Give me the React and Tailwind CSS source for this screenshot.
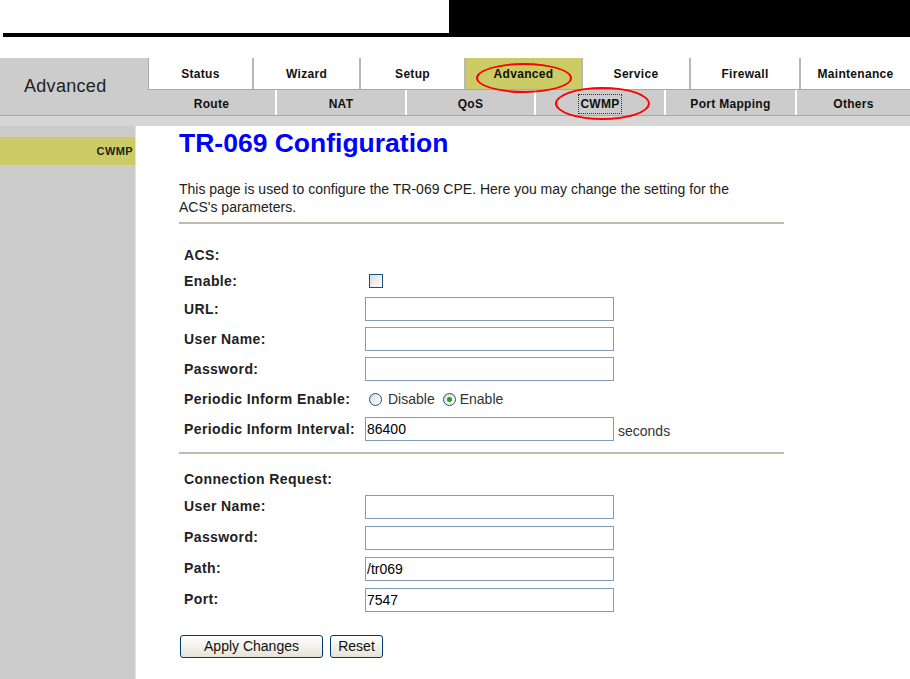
const topTabs = [
  { label: "Status", w: "w-[105px]" },
  { label: "Wizard", w: "w-[107px]" },
  { label: "Setup", w: "w-[105px]" },
  { label: "Advanced", w: "w-[117px]", active: true },
  { label: "Service", w: "w-[108px]" },
  { label: "Firewall", w: "w-[110px]" },
  { label: "Maintenance", w: "flex-1", last: true },
];

const subTabs = [
  { label: "Route", w: "w-[129px]" },
  { label: "NAT", w: "w-[130px]" },
  { label: "QoS", w: "w-[129px]" },
  { label: "CWMP", w: "w-[130px]", active: true },
  { label: "Port Mapping", w: "w-[131px]" },
  { label: "Others", w: "flex-1", last: true },
];

const TextBox = ({ value = "" }) => (
  <input
    type="text"
    defaultValue={value}
    className="w-[249px] h-[24px] border border-[#7f9db9] bg-white px-[1px] text-[14px] text-black outline-none"
  />
);

const Radio = ({ checked }) => (
  <span className="w-[13px] h-[13px] rounded-full border border-[#1c5180] bg-gradient-to-br from-[#dcdcd7] to-white flex items-center justify-center">
    {checked && <span className="w-[5px] h-[5px] rounded-full bg-[#21a121]" />}
  </span>
);

const Row = ({ label, h = "h-[30px]", children }) => (
  <div className={`flex items-center ${h}`}>
    <div className="w-[181px] text-[14px] font-bold tracking-[0.4px] text-[#222]">{label}</div>
    <div className="flex items-center">{children}</div>
  </div>
);

export default function App() {
  return (
    <div
      className="w-[910px] min-h-[679px] bg-white flex flex-col"
      style={{ fontFamily: '"Liberation Sans", Arial, sans-serif' }}
    >
      {/* TOP BAR */}
      <div className="flex h-[37px]">
        <div className="w-[449px] pl-[3px] flex flex-col justify-end">
          <div className="h-[4px] bg-black" />
        </div>
        <div className="flex-1 bg-black" />
      </div>

      {/* HEADER */}
      <div className="relative mt-[21px] flex h-[57px]">
        <div className="w-[148px] bg-[#cccccc] flex items-center pl-[24px] text-[18px] tracking-[0.3px] text-[#222]">
          Advanced
        </div>
        <div className="flex-1 flex flex-col">
          <div className="h-[32px] flex border-l border-b border-[#a8a8a8]">
            {topTabs.map((t) => (
              <div
                key={t.label}
                className={`${t.w} flex items-center justify-center text-[12px] font-bold tracking-[0.3px] text-[#111] ${
                  t.active ? "bg-[#cccc66]" : "bg-white"
                } ${t.last ? "" : "border-r-2 border-[#b8b8b8]"}`}
              >
                {t.label}
              </div>
            ))}
          </div>
          <div className="h-[25px] flex bg-[#cccccc]">
            {subTabs.map((t) => (
              <div
                key={t.label}
                className={`${t.w} flex items-center justify-center pt-[3px] text-[12px] font-bold tracking-[0.3px] text-[#111] ${
                  t.last ? "" : "border-r-2 border-white"
                }`}
              >
                <span className={t.active ? "outline outline-1 outline-dotted outline-[#333] px-[1px]" : ""}>
                  {t.label}
                </span>
              </div>
            ))}
          </div>
        </div>

        {/* red annotation ellipses */}
        <div className="absolute left-[476px] top-[5px] w-[96px] h-[30px] rounded-[50%] border-2 border-[#ff0000]" />
        <div className="absolute left-[555px] top-[29px] w-[95px] h-[33px] rounded-[50%] border-2 border-[#ff0000]" />
      </div>
      <div className="h-[1px] bg-[#a8a8a8]" />
      <div className="h-[10px] bg-[#d6d6d6]" />

      {/* BODY */}
      <div className="flex flex-1">
        <div className="w-[136px] bg-[#cccccc] border-r border-[#e2e2e2] pt-[11px]">
          <div className="h-[28px] bg-[#cccc66] flex items-center justify-end pr-[2px] text-[11px] font-bold tracking-[0.4px] text-[#222]">
            CWMP
          </div>
        </div>

        <div className="flex-1 pl-[43px] pt-[2px]">
          <h1 className="text-[26.5px] leading-[30px] font-bold text-[#0000ff]">TR-069 Configuration</h1>
          <p className="mt-[22px] w-[590px] text-[14px] leading-[18px] text-[#222]">
            This page is used to configure the TR-069 CPE. Here you may change the setting for the ACS's parameters.
          </p>
          <div className="mt-[6px] w-[605px] border-t-2 border-[#c2bbab]" />

          <div className="pl-[5px] mt-[19px]">
            <Row label="ACS:" h="h-[25px]" />
            <Row label="Enable:" h="h-[26px]">
              <span className="ml-[4px] w-[14px] h-[14px] border border-[#1c5180] bg-gradient-to-br from-[#dcdcd7] to-white" />
            </Row>
            <Row label="URL:">
              <TextBox />
            </Row>
            <Row label="User Name:">
              <TextBox />
            </Row>
            <Row label="Password:">
              <TextBox />
            </Row>
            <Row label="Periodic Inform Enable:">
              <span className="ml-[4px] flex items-center gap-[6px] text-[14px] text-[#333]">
                <Radio />
                Disable
              </span>
              <span className="ml-[8px] flex items-center gap-[4px] text-[14px] text-[#333]">
                <Radio checked />
                Enable
              </span>
            </Row>
            <Row label="Periodic Inform Interval:">
              <TextBox value="86400" />
              <span className="ml-[4px] mt-[4px] text-[14px] text-[#333]">seconds</span>
            </Row>
          </div>

          <div className="mt-[8px] w-[605px] border-t-2 border-[#c2bbab]" />

          <div className="pl-[5px] mt-[13px]">
            <Row label="Connection Request:" h="h-[24px]" />
            <Row label="User Name:" h="h-[31px]">
              <TextBox />
            </Row>
            <Row label="Password:" h="h-[31px]">
              <TextBox />
            </Row>
            <Row label="Path:" h="h-[31px]">
              <TextBox value="/tr069" />
            </Row>
            <Row label="Port:" h="h-[31px]">
              <TextBox value="7547" />
            </Row>
          </div>

          <div className="mt-[20px] flex gap-[7px] pl-[1px]">
            <button className="w-[143px] h-[23px] rounded-[3px] border border-[#003c74] bg-gradient-to-b from-white to-[#e6e3d6] text-[14px] text-[#111]">
              Apply Changes
            </button>
            <button className="w-[53px] h-[23px] rounded-[3px] border border-[#003c74] bg-gradient-to-b from-white to-[#e6e3d6] text-[14px] text-[#111]">
              Reset
            </button>
          </div>
        </div>
      </div>
    </div>
  );
}
